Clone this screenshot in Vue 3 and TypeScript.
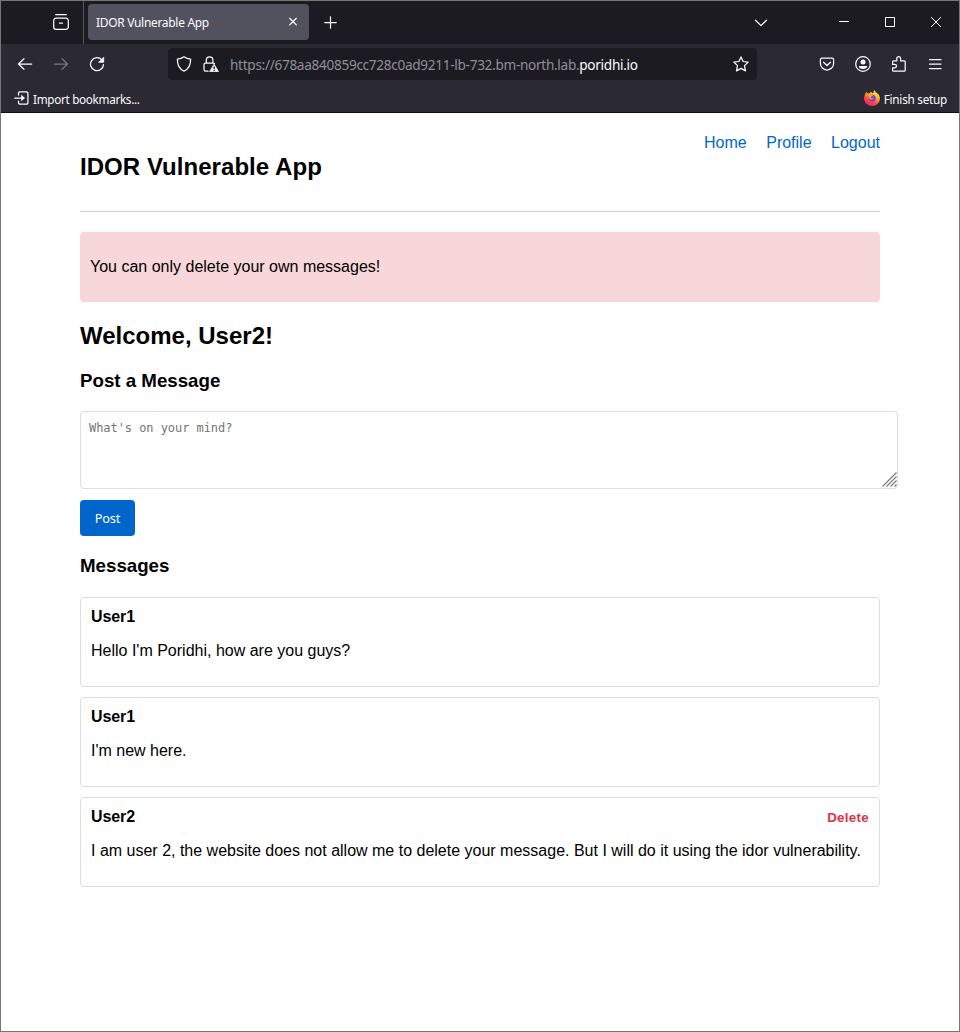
<script setup lang="ts">
import { ref } from 'vue'

interface Message {
  id: number
  author: string
  text: string
  own: boolean
}

const links: string[] = ['Home', 'Profile', 'Logout']
const draft = ref('')
const messages = ref<Message[]>([
  { id: 1, author: 'User1', text: "Hello I'm Poridhi, how are you guys?", own: false },
  { id: 2, author: 'User1', text: "I'm new here.", own: false },
  {
    id: 3,
    author: 'User2',
    text: 'I am user 2, the website does not allow me to delete your message. But I will do it using the idor vulnerability.',
    own: true,
  },
])
</script>

<template>
  <div class="window">
    <header class="titlebar">
      <div class="view">
        <svg class="ic" width="18" height="18" viewBox="0 0 18 18">
          <path d="M3.700 1.700h10.600M4 5.200h10a2.300 2.300 0 0 1 2.300 2.300v6.500a2.300 2.300 0 0 1-2.300 2.300H4a2.300 2.300 0 0 1-2.300-2.300V7.500A2.300 2.300 0 0 1 4 5.200zM7.500 10h3" />
        </svg>
      </div>
      <div class="tab">
        <span class="tab-title">IDOR Vulnerable App</span>
        <svg class="ic" width="10" height="10" viewBox="0 0 10 10"><path d="M1.700 1.300l6.600 6.600M8.300 1.300L1.700 7.900" /></svg>
      </div>
      <svg class="ic plus" width="13" height="13" viewBox="0 0 13 13"><path d="M6.5.8v11.400M.8 6.500h11.400" /></svg>
      <svg class="ic chevron" width="14" height="8" viewBox="0 0 14 8"><path d="M1.500 1.200L7 6.600l5.500-5.400" /></svg>
      <div class="controls">
        <svg class="thin" width="46" height="43" viewBox="0 0 46 43"><path d="M18 20.5h10" /></svg>
        <svg class="thin" width="46" height="43" viewBox="0 0 46 43"><path d="M18.5 16.5h9v9h-9z" /></svg>
        <svg class="thin" width="46" height="43" viewBox="0 0 46 43"><path d="M18 16l10 10M28 16L18 26" /></svg>
      </div>
    </header>

    <div class="toolbar">
      <div class="nav-buttons">
        <svg class="ic" width="16" height="16" viewBox="0 0 16 16"><path d="M14.700 8H1.500M7 2.800L1.500 8 7 13.200" /></svg>
        <svg class="ic dim" width="16" height="16" viewBox="0 0 16 16"><path d="M1.300 8h13.200M9 2.800L14.500 8 9 13.200" /></svg>
        <svg class="ic" width="16" height="16" viewBox="0 0 16 16">
          <path d="M12.900 3.900A6.500 6.500 0 1 0 14.500 8.600" />
          <path class="solid" d="M14.700 1.500v4.800H9.900z" />
        </svg>
      </div>
      <div class="urlbar">
        <svg class="ic" width="16" height="16" viewBox="0 0 16 16">
          <path d="M8 .8C6 2.300 3.700 3 1.400 3.100c-.2 5 1.200 9.600 6.600 12.100 5.400-2.500 6.800-7.100 6.600-12.100C12.300 3 10 2.300 8 .8z" />
        </svg>
        <svg class="ic lock" width="16" height="16" viewBox="0 0 16 16">
          <path d="M3.300 7V4.200a3.300 3.300 0 0 1 6.600 0V7M5 15.200H2.600A1.600 1.600 0 0 1 1 13.600V8.600A1.600 1.600 0 0 1 2.600 7h7.600a1.600 1.600 0 0 1 1.300.7" />
          <path class="solid" d="M11.200 8.500l4.300 7.100H6.900z" />
          <path class="cut" d="M11.200 10.400v2.500M11.200 13.800v1.200" />
        </svg>
        <span class="url">https://678aa840859cc728c0ad9211-lb-732.bm-north.lab.<b>poridhi.io</b></span>
        <svg class="ic star" width="16" height="16" viewBox="0 0 16 16">
          <path d="M8 .9l2.100 4.600 5.100.6-3.700 3.500 1 5.300L8 12.400l-4.500 2.500 1-5.300L.8 6.100l5.100-.6z" />
        </svg>
      </div>
      <div class="actions">
        <svg class="ic" width="16" height="16" viewBox="0 0 16 16">
          <path d="M3 2.200h10a1.600 1.600 0 0 1 1.600 1.600v3.600a6.600 6.600 0 0 1-13.200 0V3.800A1.600 1.600 0 0 1 3 2.200zM4.500 6.200L8 9.500l3.500-3.300" />
        </svg>
        <svg class="ic" width="16" height="16" viewBox="0 0 16 16">
          <circle cx="8" cy="8" r="7.300" /><circle class="solid flat" cx="8" cy="6" r="2.500" />
          <path class="solid flat" d="M4 10h8v1.300C11 12.500 9.600 13.100 8 13.100S5 12.500 4 11.300z" />
        </svg>
        <svg class="ic" width="16" height="16" viewBox="0 0 16 16">
          <path d="M2.600 4.800h3.200V2.600a1.900 1.900 0 0 1 3.800 0v2.200h3.600a1 1 0 0 1 1 1v8.400a1 1 0 0 1-1 1H2.600a1 1 0 0 1-1-1v-2.400h2.200a1.700 1.700 0 0 0 0-3.400H1.600V5.800a1 1 0 0 1 1-1z" />
        </svg>
        <svg class="ic" width="16" height="16" viewBox="0 0 16 16"><path d="M2.500 3.500h11.500M2.500 8h11.500M2.500 12.500h11.500" /></svg>
      </div>
    </div>

    <div class="bookmarks">
      <svg class="ic" width="15" height="14" viewBox="0 0 15 14">
        <path d="M4.500 4V2.200A1.400 1.400 0 0 1 5.900.8h6.600a1.400 1.400 0 0 1 1.400 1.400v9.600a1.400 1.400 0 0 1-1.400 1.400H5.900a1.400 1.400 0 0 1-1.400-1.400V10M.7 7H10" />
        <path class="solid" d="M7.800 4.600L10.300 7 7.800 9.400z" />
      </svg>
      <span class="import">Import bookmarks...</span>
      <svg class="fox" width="16" height="16" viewBox="0 0 16 16">
        <defs>
          <linearGradient id="flame" x1=".8" y1="0" x2=".25" y2="1">
            <stop offset="0" stop-color="#fff44f" /><stop offset=".35" stop-color="#ffb52e" />
            <stop offset=".65" stop-color="#ff5038" /><stop offset="1" stop-color="#f2177d" />
          </linearGradient>
        </defs>
        <path fill="url(#flame)" d="M1.300 3.500l.9-1.500 1.500 1.600 1.900-.3C6 2.500 6.700 2 7.500 1.800L7.800 3 9.500 3.100C9.200 1.700 9.700.7 10.600 0c.4 1.900 1.800 2.600 3 3.600C15.200 5 16 6.800 15.900 8.700A7.700 7.700 0 0 1 8 16C3.700 16 .2 12.700.1 8.600 0 6.700.5 5 1.300 3.500z" />
        <circle cx="8.200" cy="8.300" r="3.500" fill="#7545df" />
        <path fill="#ff9b25" d="M2.400 4.500l3.300-.8c1 .1 1.500.7 2 1.200l1.300.4c-.2 1-1.600 1.100-2 1.700-.4.700.2 1.300 1.100 1.300l1.500-.3c-.9 1.800-3 1.700-4.100.8-1.200-1-1-2.500-.2-3.300z" />
      </svg>
      <span class="finish">Finish setup</span>
    </div>

    <main class="page">
      <div class="head">
        <h2>IDOR Vulnerable App</h2>
        <nav><a v-for="link in links" :key="link">{{ link }}</a></nav>
      </div>
      <div class="alert"><p>You can only delete your own messages!</p></div>
      <h2 class="welcome">Welcome, User2!</h2>
      <h3>Post a Message</h3>
      <div class="field">
        <textarea v-model="draft" placeholder="What's on your mind?"></textarea>
        <svg class="grip" width="15" height="15" viewBox="0 0 15 15"><path d="M.5 14.500l14-14M4.500 14.500l10-10M8.500 14.500l6-6M12.500 14.500l2-2" /></svg>
      </div>
      <button class="post" type="button">Post</button>
      <h3 class="list-title">Messages</h3>
      <article v-for="message in messages" :key="message.id" class="message">
        <div class="row">
          <strong>{{ message.author }}</strong>
          <button v-if="message.own" class="delete" type="button">Delete</button>
        </div>
        <p>{{ message.text }}</p>
      </article>
    </main>
  </div>
</template>

<style>
body { margin: 0; overflow: hidden; }
</style>

<style scoped>
* { box-sizing: border-box; }
.window {
  display: flex; flex-direction: column; width: 960px; height: 1032px;
  border: 1px solid #767676; background: #fff; color: #000;
  font: 16px/18px "Liberation Sans", Arial, sans-serif;
}
svg { display: block; flex: none; }
.ic { fill: none; stroke: #fbfbfe; stroke-width: 1.25; stroke-linecap: round; stroke-linejoin: round; }
.ic .solid { fill: #fbfbfe; stroke-width: .8; }
.ic .flat { stroke: none; }
.ic .cut { stroke: #1c1b22; stroke-width: 1.3; stroke-linecap: butt; }
.ic.dim { stroke: #77767e; }
.thin { fill: none; stroke: #fff; stroke-width: 1; }
.titlebar, .toolbar, .bookmarks { flex: none; display: flex; align-items: center; color: #fbfbfe; font-family: "Noto Sans", sans-serif; }
.titlebar { height: 43px; background: #1c1b22; }
.view { width: 83px; height: 43px; padding: 12px 0 0 51px; border-right: 1px solid #56555c; }
.tab {
  display: flex; align-items: center; justify-content: space-between; width: 221px; height: 36px;
  margin: -1px 0 0 4px; padding: 0 11px 0 8px; border-radius: 4px; background: #52525e; font-size: 12px;
}
.tab-title { padding-top: 1px; letter-spacing: -.31px; white-space: nowrap; }
.plus { margin-left: 15px; }
.chevron { margin-left: auto; margin-right: 53px; }
.controls { display: flex; }
.toolbar { height: 40px; background: #2b2a33; }
.nav-buttons { display: flex; gap: 20px; padding-left: 16px; }
.urlbar {
  display: flex; align-items: center; width: 589px; height: 32px; margin-left: 63px; padding: 0 8px;
  border-radius: 4px; background: #1c1b22;
}
.lock { margin-left: 11px; }
.url { margin-left: 11px; padding-top: 1px; color: #8f8f96; font-size: 13.6px; line-height: 20px; white-space: nowrap; letter-spacing: -.3px; }
.url b { color: #fbfbfe; font-weight: 400; }
.star { margin-left: auto; }
.actions { display: flex; gap: 20px; margin-left: 62px; }
.bookmarks { height: 29px; padding: 0 12px 0 13px; border-bottom: 1px solid #0c0c0d; background: #2b2a33; font-size: 11.7px; }
.import { margin-left: 4px; padding-top: 2px; white-space: nowrap; letter-spacing: -.3px; }
.fox { margin-left: auto; }
.finish { margin-left: 4px; padding-top: 2px; white-space: nowrap; letter-spacing: -.23px; }
.page { width: 800px; margin-left: 79px; }
h2, h3, p { margin: 0; }
h2 { font-size: 24px; line-height: 27px; }
h3 { margin-top: 21px; font-size: 18.72px; line-height: 21px; }
.head { display: flex; justify-content: space-between; height: 99px; padding-top: 20px; border-bottom: 1px solid #ccc; }
.head h2 { margin-top: 20px; letter-spacing: .05px; }
nav { display: flex; gap: 19.500px; padding-top: 1px; }
nav a { color: #06c; }
.alert { height: 70px; margin-top: 20px; padding: 26px 10px; border-radius: 4px; background: #f8d7da; }
.welcome { margin-top: 20px; }
.field { position: relative; width: 818px; height: 78px; margin-top: 20px; }
textarea {
  display: block; width: 100%; height: 100%; padding: 8px; border: 1px solid #ddd; border-radius: 4px;
  resize: none; outline: none; background: #fff; font: 12px/16px "DejaVu Sans Mono", monospace; letter-spacing: -.06px;
}
textarea::placeholder { color: #757575; opacity: 1; }
.grip { position: absolute; right: 1px; bottom: 2px; fill: none; stroke: #777; stroke-width: 1.1; }
.post {
  display: block; width: 55px; height: 36px; margin-top: 11px; padding: 0; border: 0; border-radius: 4px;
  background: #06c; color: #fff; font: 12.8px/18px "Noto Sans", sans-serif; letter-spacing: -.2px;
}
.list-title { margin-top: 19px; margin-bottom: 21px; }
.message { height: 90px; margin-bottom: 10px; padding: 10px; border: 1px solid #ddd; border-radius: 4px; }
.row { display: flex; justify-content: space-between; height: 18px; }
.row strong { letter-spacing: -.1px; }
.message p { margin-top: 16px; white-space: nowrap; }
.delete {
  margin-top: 1px; padding: 0; border: 0; background: none; color: #dc3545; letter-spacing: .3px;
  font: bold 13.333px/18px "Liberation Sans", Arial, sans-serif;
}
</style>
